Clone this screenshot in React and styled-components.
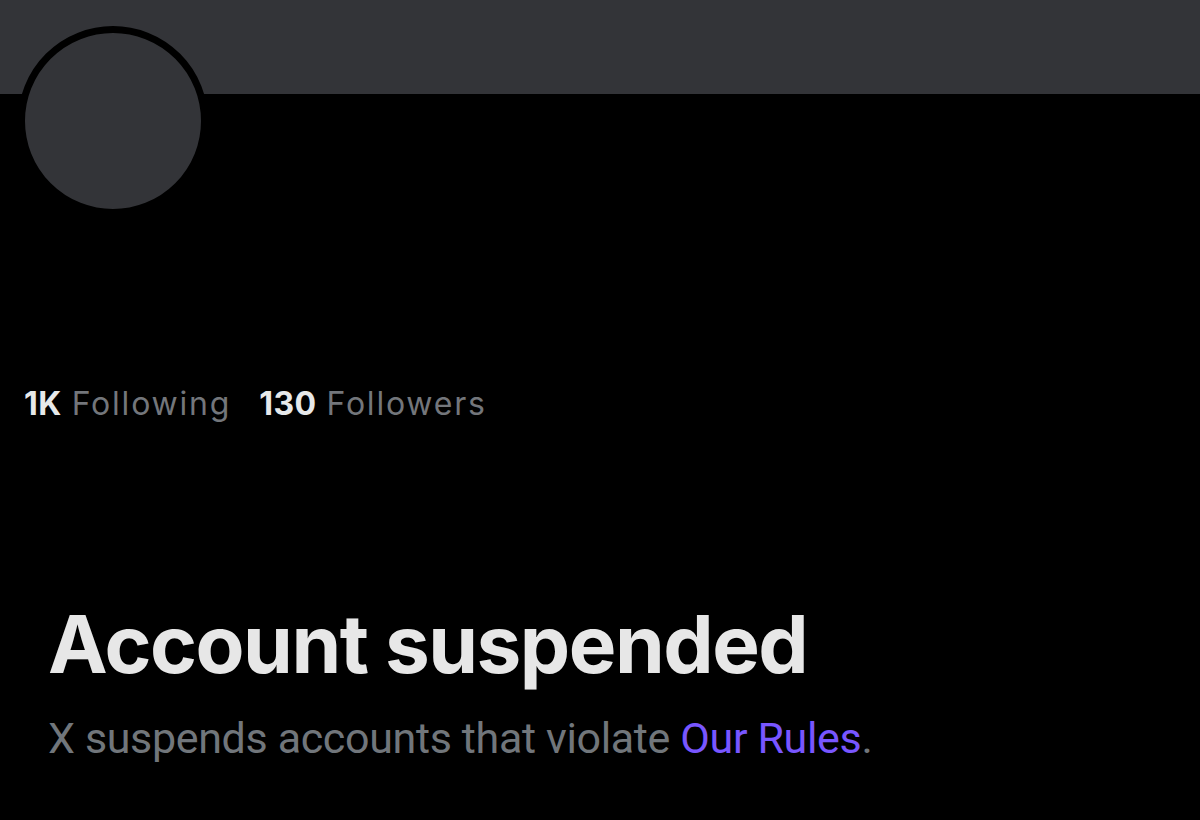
import React from 'react';
import styled, { createGlobalStyle } from 'styled-components';

const GlobalStyle = createGlobalStyle`
  html, body {
    margin: 0;
    padding: 0;
    background: #000000;
  }
  body {
    font-family: Inter, Roboto, 'Liberation Sans', sans-serif;
    -webkit-font-smoothing: antialiased;
  }
`;

const Page = styled.div`
  width: 1200px;
  height: 820px;
  background: #000000;
  overflow: hidden;
`;

const Banner = styled.div`
  height: 94px;
  background-color: #333438;
`;

const Body = styled.div`
  display: flex;
  flex-direction: column;
  padding-left: 18px;
`;

const Avatar = styled.div`
  width: 176px;
  height: 176px;
  margin-top: -68px;
  border: 7px solid #000000;
  border-radius: 50%;
  background-color: #333438;
`;

const Stats = styled.div`
  display: flex;
  gap: 28px;
  margin-top: 168px;
  padding-left: 6px;
  font-family: Inter, sans-serif;
  font-size: 32px;
  line-height: 40px;
  letter-spacing: 1.8px;
`;

const Stat = styled.span`
  color: #73767b;
  b {
    color: #e7e9ea;
    font-weight: 700;
    letter-spacing: 0.4px;
    margin-right: 10px;
  }
`;

const Notice = styled.div`
  display: flex;
  flex-direction: column;
  margin-top: 172px;
  padding-left: 30px;
`;

const Title = styled.h1`
  margin: 0;
  color: #e7e7e7;
  font-family: Inter, sans-serif;
  font-size: 80px;
  line-height: 96px;
  font-weight: 700;
  letter-spacing: -1.5px;
`;

const Text = styled.p`
  margin: 18px 0 0;
  color: #71767b;
  font-family: Roboto, sans-serif;
  font-size: 43px;
  line-height: 56px;
  letter-spacing: -0.35px;
`;

const Link = styled.a`
  color: #7856ff;
  text-decoration: none;
`;

export default function App() {
  return (
    <Page>
      <GlobalStyle />
      <Banner />
      <Body>
        <Avatar />
        <Stats>
          <Stat>
            <b>1K</b>Following
          </Stat>
          <Stat>
            <b>130</b>Followers
          </Stat>
        </Stats>
        <Notice>
          <Title>Account suspended</Title>
          <Text>
            X suspends accounts that violate <Link href="#">Our Rules</Link>.
          </Text>
        </Notice>
      </Body>
    </Page>
  );
}
